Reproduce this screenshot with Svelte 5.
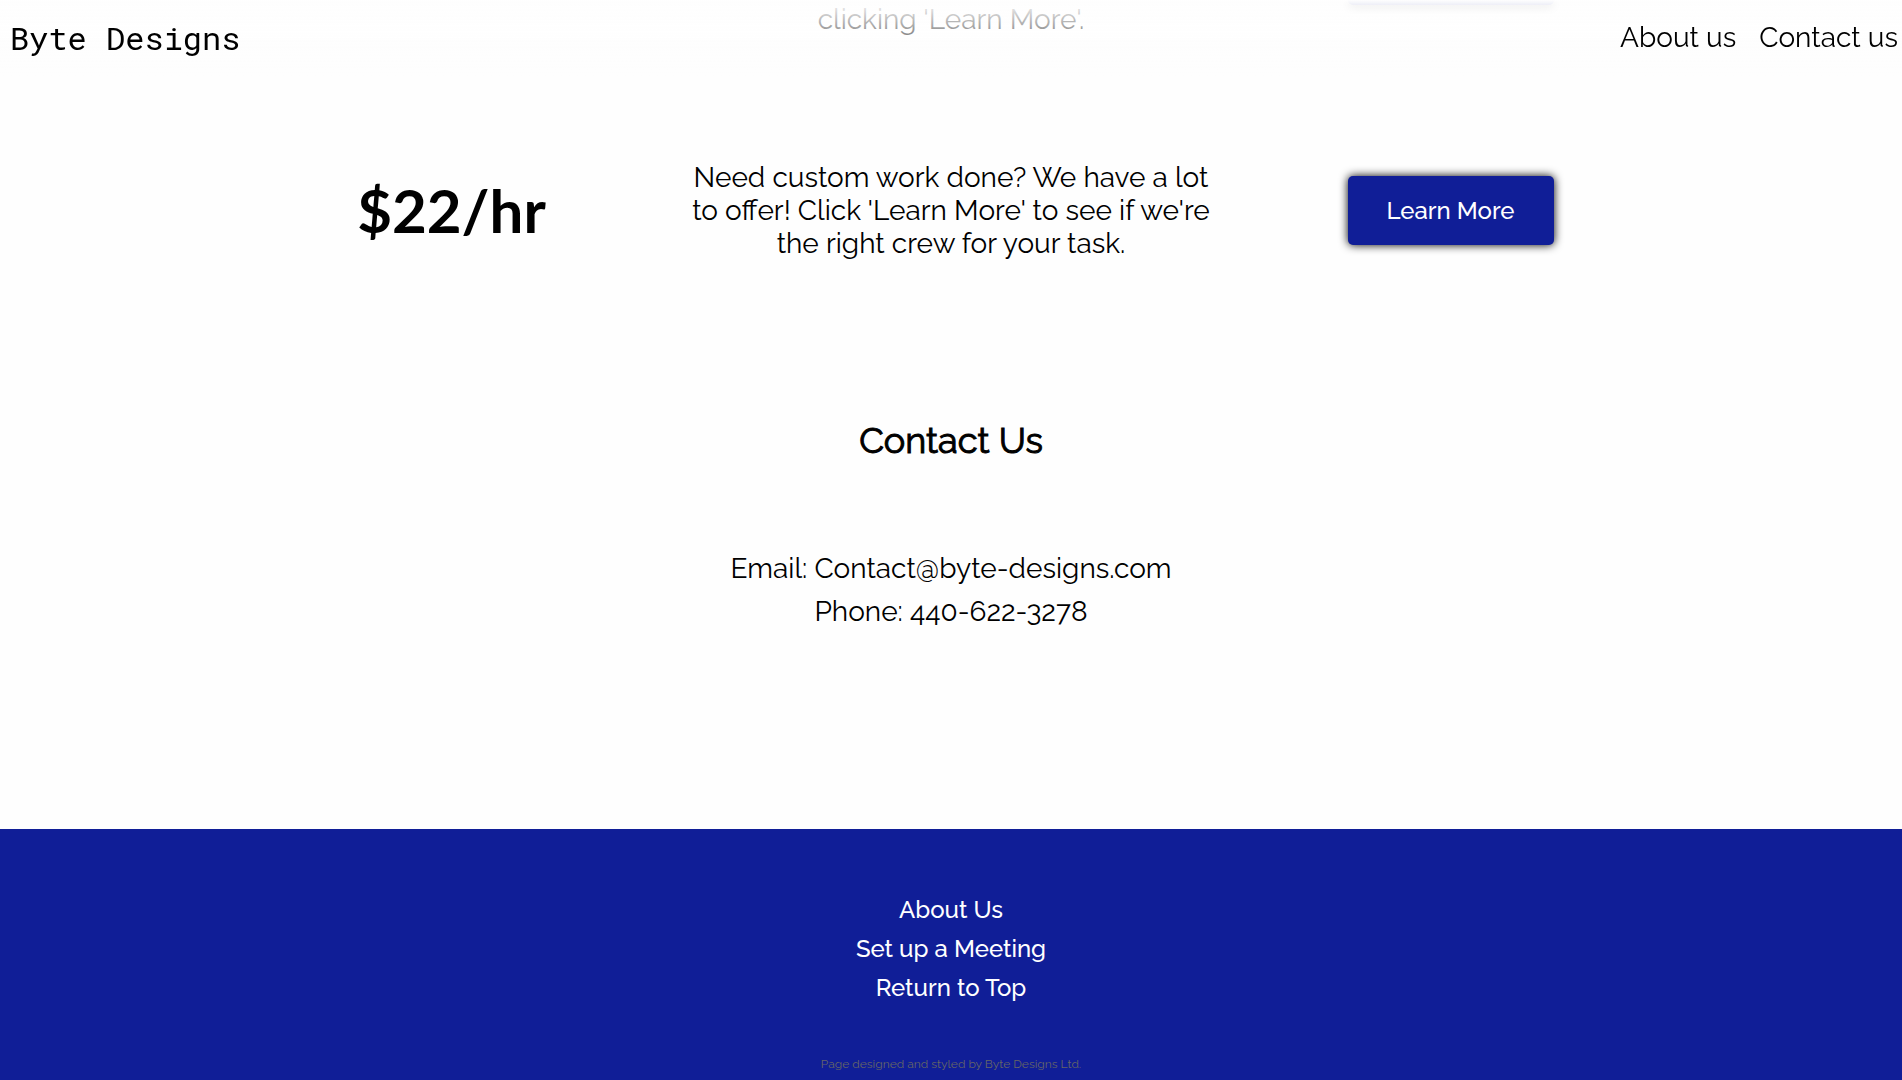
<script>
  const contact = [
    { label: 'Email', value: 'Contact@byte-designs.com' },
    { label: 'Phone', value: '440-622-3278' },
  ];
  const footerLinks = [
    { text: 'About Us', href: '#about' },
    { text: 'Set up a Meeting', href: '#meeting' },
    { text: 'Return to Top', href: '#top' },
  ];
</script>

<header>
  <a class="brand" href="#top">Byte Designs</a>
  <nav>
    <a href="#about">About us</a>
    <a href="#contact">Contact us</a>
  </nav>
</header>

<main>
  <!-- Tail of the offer that is scrolled under the header -->
  <section class="offer previous">
    <div></div>
    <p>clicking 'Learn More'.</p>
    <div class="action"><button type="button" aria-label="Learn More"></button></div>
  </section>

  <section class="offer">
    <h2 class="price">$22/hr</h2>
    <p>Need custom work done? We have a lot to offer! Click 'Learn More' to see if we're the right crew for your task.</p>
    <div class="action"><button type="button">Learn More</button></div>
  </section>

  <section class="contact" id="contact">
    <h2>Contact Us</h2>
    {#each contact as item}
      <p>{item.label}: {item.value}</p>
    {/each}
  </section>
</main>

<footer>
  <nav>
    {#each footerLinks as link}
      <a href={link.href}>{link.text}</a>
    {/each}
  </nav>
  <small>Page designed and styled by Byte Designs Ltd.</small>
</footer>

<style>
  :global(body) {
    background: #fefefe;
    color: #000;
    font-family: Raleway, Lato, sans-serif;
    font-size: 28px;
    font-weight: 400;
    line-height: 33px;
  }

  :global(#app) {
    display: flex;
    flex-direction: column;
    min-height: 100vh;
  }

  header {
    position: fixed;
    inset: 0 0 auto;
    z-index: 1;
    box-sizing: border-box;
    height: 76px;
    padding: 0 4px 2px 10px;
    display: flex;
    align-items: center;
    justify-content: space-between;
    background: linear-gradient(#fefefe, rgba(254, 254, 254, 0));
  }

  a {
    color: inherit;
    text-decoration: none;
  }

  .brand {
    font-family: "Roboto Mono", "Liberation Mono", monospace;
    font-size: 32px;
  }

  header nav {
    display: flex;
    gap: 23px;
  }

  h2,
  p {
    margin: 0;
  }

  .offer {
    display: grid;
    grid-template-columns: 1fr 520px 1fr;
    align-items: center;
    padding: 161px 212px 0;
    text-align: center;
  }

  .offer.previous {
    height: 36px;
    grid-template-rows: 36px;
    margin-bottom: -36px;
    padding-top: 0;
    align-items: end;
  }

  .previous .action {
    padding-bottom: 31px;
  }

  .price {
    padding-bottom: 2px;
    font-family: Lato, sans-serif;
    font-size: 60px;
    font-weight: 700;
    line-height: 72px;
  }

  .action {
    display: flex;
    justify-content: center;
  }

  button {
    width: 206px;
    height: 69px;
    border: 0;
    border-radius: 5px;
    background: #101e97;
    box-shadow: 0 0 10px #000;
    color: #fff;
    font: 500 24px/28px Raleway, Lato, sans-serif;
  }

  .contact {
    display: flex;
    flex-direction: column;
    align-items: center;
    gap: 10px;
    padding: 158px 20px 201px;
  }

  .contact h2 {
    margin-bottom: 80px;
    font-size: 36px;
    font-weight: 400;
    line-height: 44px;
    -webkit-text-stroke: 1px currentColor;
  }

  footer {
    flex: 1;
    display: flex;
    flex-direction: column;
    align-items: center;
    justify-content: space-between;
    padding: 67px 20px 8px;
    background: #101e97;
    color: #fff;
  }

  footer nav {
    display: flex;
    flex-direction: column;
    align-items: center;
    gap: 11px;
    font-size: 24px;
    font-weight: 500;
    line-height: 28px;
  }

  small {
    color: #666;
    font-size: 12px;
    font-weight: 400;
    line-height: 16px;
  }
</style>
